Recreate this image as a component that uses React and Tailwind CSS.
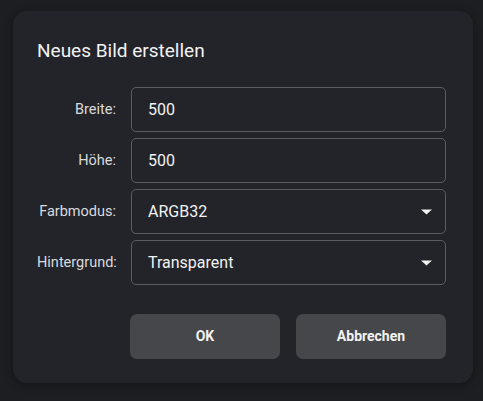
export default function App() {
  const rows = [
    { label: "Breite:", value: "500", select: false },
    { label: "Höhe:", value: "500", select: false },
    { label: "Farbmodus:", value: "ARGB32", select: true },
    { label: "Hintergrund:", value: "Transparent", select: true },
  ];
  return (
    <div className="w-[483px] h-[401px] bg-[#1c1e22] pt-[11px] pl-[13px]" style={{ fontFamily: "Roboto, 'Noto Sans', sans-serif" }}>
      <div className="w-[460px] h-[372px] rounded-[14px] bg-[#22242a] shadow-[0_2px_8px_rgba(0,0,0,0.35)] pl-6 pr-[27px] pt-[28px]">
        <div className="text-[19px] leading-[24px] text-[#f2f2f2]">Neues Bild erstellen</div>
        <div className="mt-[24px] flex flex-col gap-[6px]">
          {rows.map((r) => (
            <div key={r.label} className="flex items-center">
              <div className="w-[94px] pr-[15px] text-right text-[14.5px] text-[#dadadc]">{r.label}</div>
              <div className="flex-1 h-[45px] rounded-[5px] border border-[#5a5c61] flex items-center pl-4 pr-[13px] justify-between">
                <span className="text-[16px] text-[#f2f2f2]">{r.value}</span>
                {r.select && (
                  <svg width="11" height="6" viewBox="0 0 11 6">
                    <path d="M0 0.5 L11 0.5 L5.5 5.5 Z" fill="#f2f2f2" />
                  </svg>
                )}
              </div>
            </div>
          ))}
        </div>
        <div className="mt-[29px] flex justify-end gap-4">
          <button className="w-[150px] h-[45px] rounded-[7px] bg-[#46474b] text-[14px] font-bold text-[#f2f2f2]">OK</button>
          <button className="w-[150px] h-[45px] rounded-[7px] bg-[#46474b] text-[14px] font-bold text-[#f2f2f2]">Abbrechen</button>
        </div>
      </div>
    </div>
  );
}
